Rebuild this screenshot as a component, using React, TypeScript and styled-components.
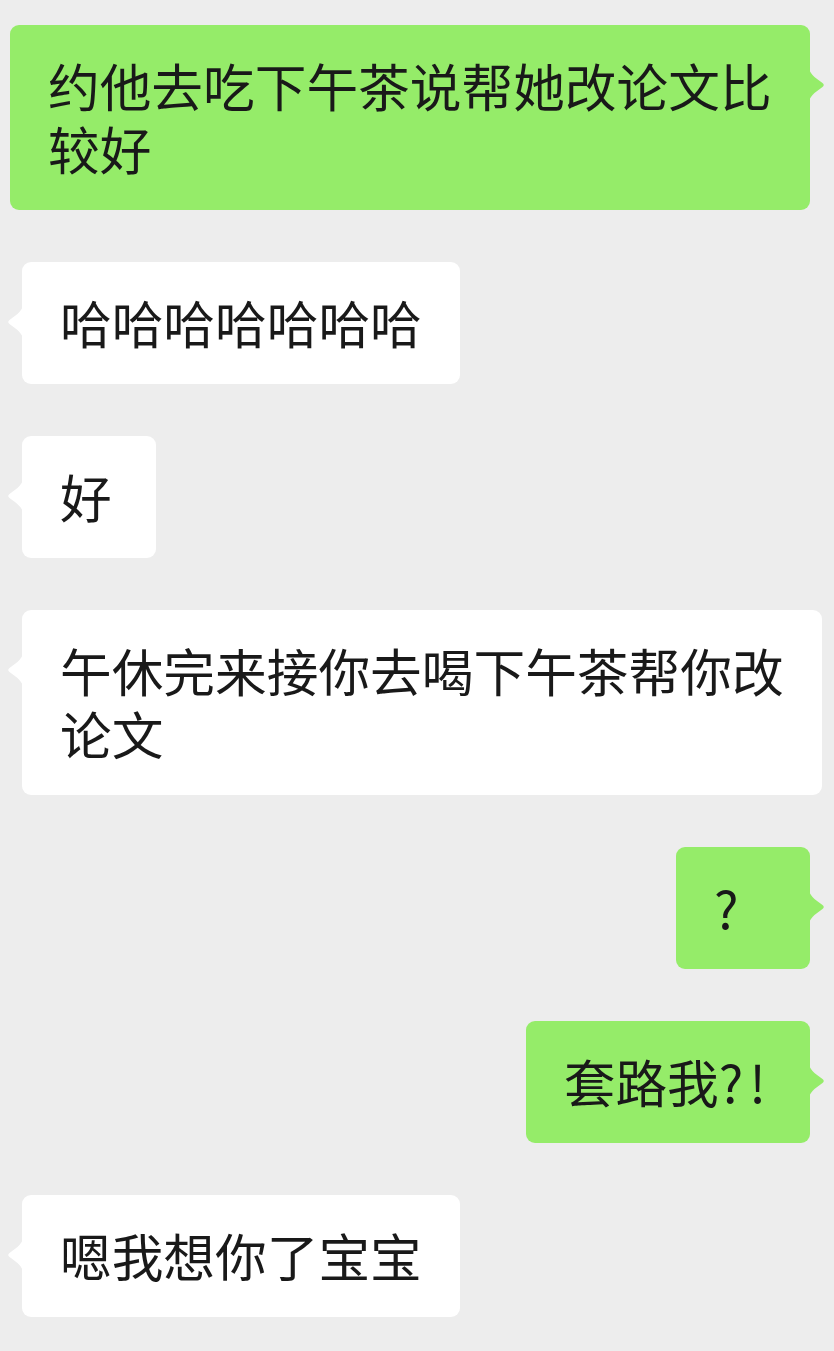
import React from "react";
import styled, { createGlobalStyle } from "styled-components";

const GlobalStyle = createGlobalStyle`
  html, body {
    margin: 0;
    padding: 0;
    background: #ededed;
  }
  body {
    font-family: "Noto Sans CJK SC", "Noto Sans", sans-serif;
  }
`;

const Chat = styled.div`
  display: flex;
  flex-direction: column;
  gap: 52px;
  padding: 25px 0 34px;
  background: #ededed;
  min-height: 1351px;
  box-sizing: border-box;
`;

const Row = styled.div<{ $mine: boolean }>`
  display: flex;
  justify-content: ${(p) => (p.$mine ? "flex-end" : "flex-start")};
  padding: ${(p) => (p.$mine ? "0 24px 0 0" : "0 0 0 22px")};
`;

const Bubble = styled.div<{ $mine: boolean }>`
  position: relative;
  box-sizing: border-box;
  max-width: 800px;
  min-width: 134px;
  padding: 28px 38px 31px 38px;
  border-radius: 9px;
  background: ${(p) => (p.$mine ? "#95ec69" : "#ffffff")};
  color: #191919;
  font-family: "Noto Sans CJK SC", sans-serif;
  font-size: 51.7px;
  line-height: 63px;
  word-break: break-all;
`;

const Tail = styled.svg<{ $mine: boolean }>`
  position: absolute;
  top: 42px;
  width: 16px;
  height: 36px;
  ${(p) => (p.$mine ? "right: -15px; transform: scaleX(-1);" : "left: -15px;")}
  fill: ${(p) => (p.$mine ? "#95ec69" : "#ffffff")};
`;

const Punct = styled.span`
  letter-spacing: 6px;
`;

type Msg = { mine: boolean; content: React.ReactNode };

const messages: Msg[] = [
  { mine: true, content: "约他去吃下午茶说帮她改论文比较好" },
  { mine: false, content: "哈哈哈哈哈哈哈" },
  { mine: false, content: "好" },
  { mine: false, content: "午休完来接你去喝下午茶帮你改论文" },
  { mine: true, content: "?" },
  {
    mine: true,
    content: (
      <>
        套路我<Punct>?!</Punct>
      </>
    ),
  },
  { mine: false, content: "嗯我想你了宝宝" },
];

export default function App() {
  return (
    <>
      <GlobalStyle />
      <Chat>
        {messages.map((m, i) => (
          <Row key={i} $mine={m.mine}>
            <Bubble $mine={m.mine}>
              <Tail $mine={m.mine} viewBox="0 0 16 36" aria-hidden="true">
                <path d="M16 0 C16 6 11 10 2.5 16 Q0 18 2.5 20 C11 26 16 30 16 36 Z" />
              </Tail>
              {m.content}
            </Bubble>
          </Row>
        ))}
      </Chat>
    </>
  );
}
